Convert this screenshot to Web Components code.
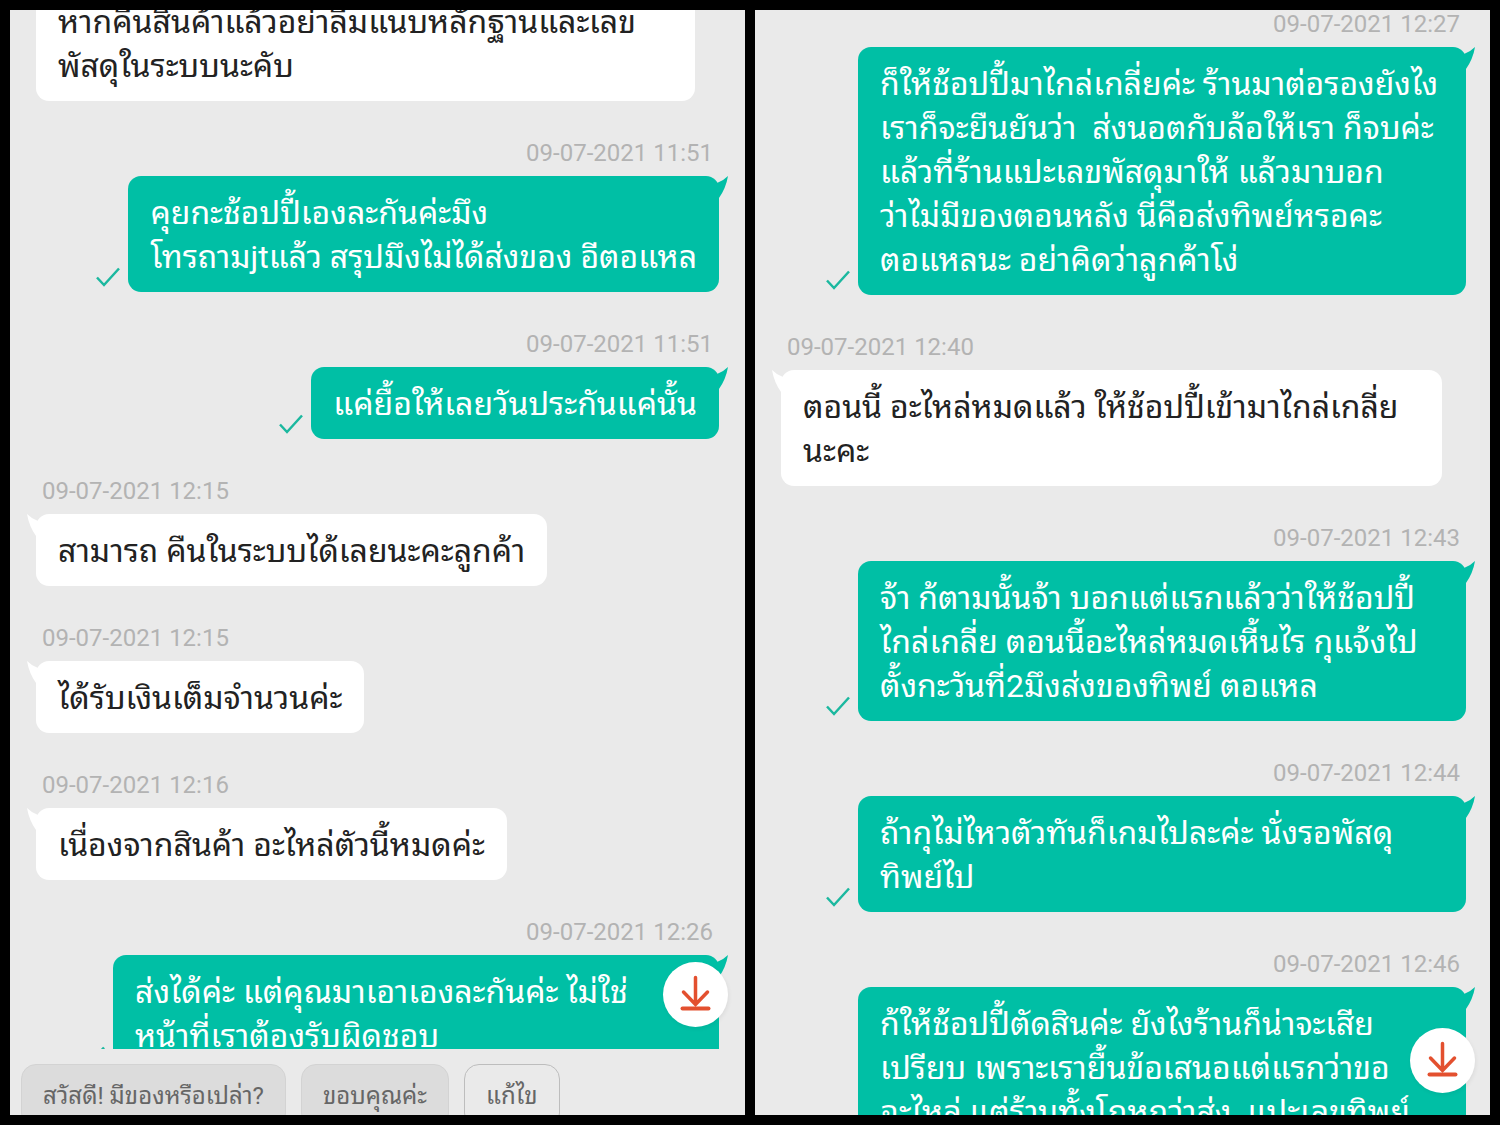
<!DOCTYPE html>
<html lang="th">
<head>
<meta charset="utf-8">
<title>Chat</title>
<style>
  body {
    margin: 0;
    height: 100vh;
    box-sizing: border-box;
    padding: 10px;
    display: grid;
    grid-template-columns: 1fr 1fr;
    gap: 10px;
    background: #000;
    font-family: Roboto, "Noto Sans Thai Looped", "Noto Sans Thai", "Noto Sans", sans-serif;
  }
  #first {
    --scroll: -25px;
    --edge: 26px;
  }
</style>
</head>
<body>

<template id="chat-panel">
  <style>
    :host {
      display: flex;
      flex-direction: column;
      min-width: 0;
      min-height: 0;
      overflow: hidden;
      background: #eaeaea;
    }
    #view {
      flex: 1;
      min-height: 0;
      position: relative;
      overflow: hidden;
    }
    #list {
      display: flex;
      flex-direction: column;
      gap: 38px;
      margin-top: var(--scroll, 0);
      padding: 0 var(--edge, 24px) 0 26px;
    }
    button {
      position: absolute;
      right: calc(var(--edge, 24px) - 9px);
      bottom: 22px;
      width: 65px;
      height: 65px;
      padding: 0;
      border: 0;
      border-radius: 50%;
      background: #fff;
      box-shadow: 1px 2px 4px rgba(0, 0, 0, .06);
    }
    svg {
      display: block;
      margin: auto;
    }
  </style>
  <div id="view">
    <div id="list"><slot></slot></div>
    <button id="btn-down" aria-label="เลื่อนลงล่างสุด">
      <svg width="33" height="39" viewBox="0 0 33 39" fill="none" stroke="#e3502f" stroke-linecap="round">
        <path d="M16.500 2.500V29M4.500 17L16.500 29.500L28.500 17" stroke-width="3.500"/>
        <path d="M3.500 33.500H29.500" stroke-width="4"/>
      </svg>
    </button>
  </div>
  <slot name="footer"></slot>
</template>

<template id="chat-message">
  <style>
    :host {
      display: flex;
      flex-direction: column;
      align-items: flex-start;
      gap: 9px;
      color: #222;
      --bubble: #fff;
    }
    :host([sent]) {
      align-items: flex-end;
      color: #fff;
      --bubble: #00bfa5;
    }
    time {
      padding: 0 6px;
      font-size: 24px;
      line-height: 28px;
      color: #b3b3b3;
    }
    :host(:not([time])) time {
      display: none;
    }
    #row {
      display: flex;
      align-items: flex-end;
      gap: 8px;
      max-width: 100%;
    }
    #bubble {
      position: relative;
      box-sizing: border-box;
      padding: 15px 22px 13px;
      border-radius: 13px;
      background: var(--bubble);
      font-size: 32px;
      line-height: 44px;
      white-space: nowrap;
    }
    /* long messages take the full bubble width */
    :host([wide]) #row {
      align-self: stretch;
      margin-right: 24px;
    }
    :host([wide]) #bubble {
      flex: 1;
      min-width: 0;
    }
    :host([wide][sent]) #row {
      margin-right: 0;
      margin-left: 45px;
    }
    #tail {
      position: absolute;
      top: 0;
      left: -9px;
      fill: var(--bubble);
      transform: scaleX(-1);
    }
    :host([sent]) #tail {
      left: auto;
      right: -9px;
      transform: none;
    }
    :host(:not([time])) #tail {
      display: none;
    }
    #check {
      flex: none;
      display: none;
      margin-bottom: 5px;
    }
    :host([sent]) #check {
      display: block;
    }
  </style>
  <time></time>
  <div id="row">
    <svg id="check" width="24" height="20" viewBox="0 0 24 20" fill="none" stroke="#1bb89f" stroke-width="2.500">
      <path d="M1 10.500L8 18L23 1.500"/>
    </svg>
    <div id="bubble">
      <svg id="tail" width="12" height="22" viewBox="0 0 12 22"><path d="M12 0Q7 5 1 7L0 9V22H3Q10 12 12 0Z"/></svg>
      <slot></slot>
    </div>
  </div>
</template>

<template id="quick-replies">
  <style>
    :host {
      display: flex;
      gap: 15px;
      height: 51px;
      padding: 15px 11px 0;
      overflow: hidden;
    }
  </style>
  <slot></slot>
</template>

<template id="quick-reply">
  <style>
    :host {
      display: block;
      flex: none;
    }
    button {
      box-sizing: border-box;
      height: 64px;
      padding: 0 21px;
      border: 1px solid #d3d3d3;
      border-radius: 15px;
      background: #dcdcdc;
      color: #666;
      font-family: inherit;
      font-size: 24px;
      line-height: 36px;
      white-space: nowrap;
    }
    :host([outline]) button {
      border-color: #bdbdbd;
      background: transparent;
    }
  </style>
  <button><slot></slot></button>
</template>

<script>

  // stamps the template with the same id as the tag
  class ChatElement extends HTMLElement {
    constructor() {
      super();
      const template = document.getElementById(this.localName);
      this.attachShadow({mode: 'open'}).appendChild(template.content.cloneNode(true));
    }
  }

  customElements.define('chat-panel', class extends ChatElement {
    connectedCallback() {
      const list = this.shadowRoot.getElementById('list');
      this.shadowRoot.getElementById('btn-down').addEventListener('click', () => {
        list.scrollIntoView({block: 'end', behavior: 'smooth'});
      });
    }
  });

  customElements.define('chat-message', class extends ChatElement {
    static get observedAttributes() { return ['time']; }

    attributeChangedCallback(name, oldValue, value) {
      this.shadowRoot.querySelector('time').textContent = value;
    }
  });

  customElements.define('quick-replies', class extends ChatElement {});
  customElements.define('quick-reply', class extends ChatElement {});

</script>

<chat-panel id="first">
  <chat-message wide>หากคืนสินค้าแล้วอย่าลืมแนบหลักฐานและเลข<br>พัสดุในระบบนะคับ</chat-message>
  <chat-message sent time="09-07-2021 11:51">คุยกะช้อปปี้เองละกันค่ะมึง<br>โทรถามjtแล้ว สรุปมึงไม่ได้ส่งของ อีตอแหล</chat-message>
  <chat-message sent time="09-07-2021 11:51">แค่ยื้อให้เลยวันประกันแค่นั้น</chat-message>
  <chat-message time="09-07-2021 12:15">สามารถ คืนในระบบได้เลยนะคะลูกค้า</chat-message>
  <chat-message time="09-07-2021 12:15">ได้รับเงินเต็มจำนวนค่ะ</chat-message>
  <chat-message time="09-07-2021 12:16">เนื่องจากสินค้า อะไหล่ตัวนี้หมดค่ะ</chat-message>
  <chat-message sent wide time="09-07-2021 12:26">ส่งได้ค่ะ แต่คุณมาเอาเองละกันค่ะ ไม่ใช่<br>หน้าที่เราต้องรับผิดชอบ</chat-message>
  <quick-replies slot="footer">
    <quick-reply>สวัสดี! มีของหรือเปล่า?</quick-reply>
    <quick-reply>ขอบคุณค่ะ</quick-reply>
    <quick-reply outline>แก้ไข</quick-reply>
  </quick-replies>
</chat-panel>

<chat-panel>
  <chat-message sent wide time="09-07-2021 12:27">ก็ให้ช้อปปี้มาไกล่เกลี่ยค่ะ ร้านมาต่อรองยังไง<br>เราก็จะยืนยันว่า&nbsp; ส่งนอตกับล้อให้เรา ก็จบค่ะ<br>แล้วที่ร้านแปะเลขพัสดุมาให้ แล้วมาบอก<br>ว่าไม่มีของตอนหลัง นี่คือส่งทิพย์หรอคะ<br>ตอแหลนะ อย่าคิดว่าลูกค้าโง่</chat-message>
  <chat-message wide time="09-07-2021 12:40">ตอนนี้ อะไหล่หมดแล้ว ให้ช้อปปี้เข้ามาไกล่เกลี่ย<br>นะคะ</chat-message>
  <chat-message sent wide time="09-07-2021 12:43">จ้า ก้ตามนั้นจ้า บอกแต่แรกแล้วว่าให้ช้อปปี้<br>ไกล่เกลี่ย ตอนนี้อะไหล่หมดเหี้นไร กุแจ้งไป<br>ตั้งกะวันที่2มึงส่งของทิพย์ ตอแหล</chat-message>
  <chat-message sent wide time="09-07-2021 12:44">ถ้ากุไม่ไหวตัวทันก็เกมไปละค่ะ นั่งรอพัสดุ<br>ทิพย์ไป</chat-message>
  <chat-message sent wide time="09-07-2021 12:46">ก้ให้ช้อปปี้ตัดสินค่ะ ยังไงร้านก็น่าจะเสีย<br>เปรียบ เพราะเรายื้นข้อเสนอแต่แรกว่าขอ<br>อะไหล่ แต่ร้านทั้งโกหกว่าส่ง&nbsp; แปะเลขทิพย์</chat-message>
</chat-panel>

</body>
</html>
